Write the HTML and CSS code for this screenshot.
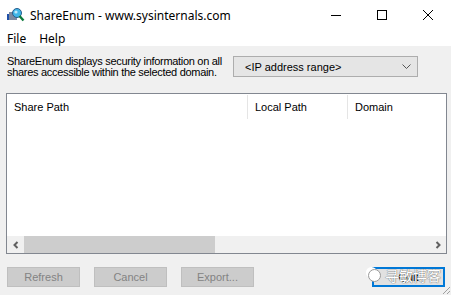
FILE: index.html
```html
<!doctype html>
<html>
  <head>
    <meta charset='utf-8'>
    <title>ShareEnum</title>
    <link rel="stylesheet" href="styles.css">
  </head>
  <body>
    <div class="window">
      <div class="titlebar">
        <svg class="app-icon" width="18" height="14" viewBox="0 0 18 14">
          <rect x="0" y="6" width="6" height="6" fill="#1f4fa8"/>
          <rect x="2" y="4" width="8" height="8" fill="#7d8aa0"/>
          <circle cx="10" cy="5" r="4.5" fill="#3fb6e8" stroke="#2a5c8c" stroke-width="1"/>
          <circle cx="9" cy="4" r="1.6" fill="#bfe9fb"/>
          <path d="M12.5 8 L16.5 12.5" stroke="#0c7a3c" stroke-width="2.4"/>
        </svg>
        <span class="title">ShareEnum - www.sysinternals.com</span>
        <div class="caption">
          <span class="cap-btn"><svg width="10" height="10" viewBox="0 0 10 10"><path d="M0 5.5H10" stroke="#000" stroke-width="1"/></svg></span>
          <span class="cap-btn"><svg width="10" height="10" viewBox="0 0 10 10"><rect x="0.5" y="0.5" width="9" height="9" fill="none" stroke="#000" stroke-width="1"/></svg></span>
          <span class="cap-btn"><svg width="10" height="10" viewBox="0 0 10 10"><path d="M0 0L10 10M10 0L0 10" stroke="#000" stroke-width="1"/></svg></span>
        </div>
      </div>
      <div class="menubar">
        <span class="menu">File</span>
        <span class="menu">Help</span>
      </div>
      <div class="dialog">
        <div class="top">
          <p class="desc">ShareEnum displays security information on all<br>shares accessible within the selected domain.</p>
          <div class="combo">
            <span>&lt;IP address range&gt;</span>
            <svg width="9" height="6" viewBox="0 0 9 6"><path d="M0.5 0.5L4.5 4.5L8.5 0.5" fill="none" stroke="#555" stroke-width="1"/></svg>
          </div>
        </div>
        <div class="listview">
          <div class="header">
            <div class="col c1">Share Path</div>
            <div class="col c2">Local Path</div>
            <div class="col c3">Domain</div>
          </div>
          <div class="rows"></div>
          <div class="hscroll">
            <span class="arrow"><svg width="8" height="8" viewBox="0 0 8 8"><path d="M5.5 1L2.5 4L5.5 7" fill="none" stroke="#606060" stroke-width="2"/></svg></span>
            <div class="track"><div class="thumb"></div></div>
            <span class="arrow"><svg width="8" height="8" viewBox="0 0 8 8"><path d="M2.5 1L5.5 4L2.5 7" fill="none" stroke="#606060" stroke-width="2"/></svg></span>
          </div>
        </div>
        <div class="buttons">
          <button class="btn" disabled>Refresh</button>
          <button class="btn" disabled>Cancel</button>
          <button class="btn" disabled>Export...</button>
          <span class="spacer"></span>
          <button class="btn default">Quit</button>
        </div>
        <div class="watermark">
          <span class="wm-icon"></span>
          <span class="wm-text">寻敏博客</span>
        </div>
        <svg class="grip" width="12" height="12" viewBox="0 0 12 12">
          <path d="M11 4L4 11M11 8L8 11" stroke="#a0a0a0" stroke-width="1"/>
        </svg>
      </div>
    </div>
  </body>
</html>
```
FILE: styles.css
```css
html, body {
  margin: 0;
  padding: 0;
}
body {
  width: 451px;
  height: 295px;
  overflow: hidden;
  background: #f0f0f0;
}
.window {
  display: flex;
  flex-direction: column;
  height: 295px;
}
.titlebar {
  height: 30px;
  background: #fff;
  display: flex;
  align-items: center;
  font-family: "Noto Sans", sans-serif;
  font-size: 12px;
  color: #000;
}
.app-icon {
  margin-left: 7px;
  margin-right: 5px;
}
.caption {
  margin-left: auto;
  display: flex;
  height: 30px;
}
.cap-btn {
  width: 46px;
  display: flex;
  align-items: center;
  justify-content: center;
}
.menubar {
  height: 16px;
  background: #fff;
  display: flex;
  align-items: center;
  padding-left: 7px;
  gap: 13px;
  font-family: "Noto Sans", sans-serif;
  font-size: 12px;
}
.dialog {
  flex: 1;
  position: relative;
  font-family: "Liberation Sans", Arial, sans-serif;
  font-size: 11px;
  color: #000;
}
.top {
  display: flex;
  padding: 10px 0 0 7px;
  height: 37px;
}
.desc {
  margin: 0;
  line-height: 11px;
  width: 226px;
  letter-spacing: -0.3px;
}
.combo {
  width: 185px;
  height: 21px;
  box-sizing: border-box;
  border: 1px solid #adadad;
  background: #e5e5e5;
  display: flex;
  align-items: center;
  padding-left: 11px;
}
.combo span {
  flex: 1;
}
.combo svg {
  margin-right: 6px;
}
.listview {
  margin: 0 4px 0 6px;
  height: 159px;
  border: 1px solid #828790;
  background: #fff;
  display: flex;
  flex-direction: column;
}
.header {
  display: flex;
  height: 24px;
  margin-top: 1px;
}
.col {
  display: flex;
  align-items: center;
  padding-left: 7px;
  font-size: 11px;
  border-right: 1px solid #e5e5e5;
}
.c1 { width: 233px; }
.c2 { width: 92px; }
.c3 { width: 80px; border-right: none; }
.rows {
  flex: 1;
}
.hscroll {
  height: 17px;
  display: flex;
  background: #f0f0f0;
}
.arrow {
  width: 17px;
  display: flex;
  align-items: center;
  justify-content: center;
}
.track {
  flex: 1;
  display: flex;
}
.thumb {
  width: 191px;
  background: #cdcdcd;
}
.buttons {
  display: flex;
  padding: 13px 6px 0 7px;
  gap: 14px;
}
.spacer {
  flex: 1;
}
.btn {
  width: 73px;
  height: 20px;
  margin: 0;
  padding: 0;
  font-family: "Liberation Sans", Arial, sans-serif;
  font-size: 11px;
  background: #cccccc;
  border: 1px solid #bfbfbf;
  color: #838383;
}
.btn.default {
  background: #e1e1e1;
  border: 2px solid #0078d7;
  color: #000;
}
.watermark {
  position: absolute;
  left: 368px;
  top: 219px;
  display: flex;
  align-items: center;
  gap: 4px;
  pointer-events: none;
}
.wm-icon {
  width: 11px;
  height: 11px;
  border-radius: 50%;
  background: #fff;
  border: 1px solid #999;
  box-shadow: -3px -3px 0 -1px #fff;
}
.wm-text {
  font-family: "Noto Sans CJK SC", sans-serif;
  font-size: 14px;
  color: #fff;
  text-shadow: 0 0 1px #666, 0 0 1px #666;
}
.grip {
  position: absolute;
  right: 0;
  bottom: 0;
}
```
